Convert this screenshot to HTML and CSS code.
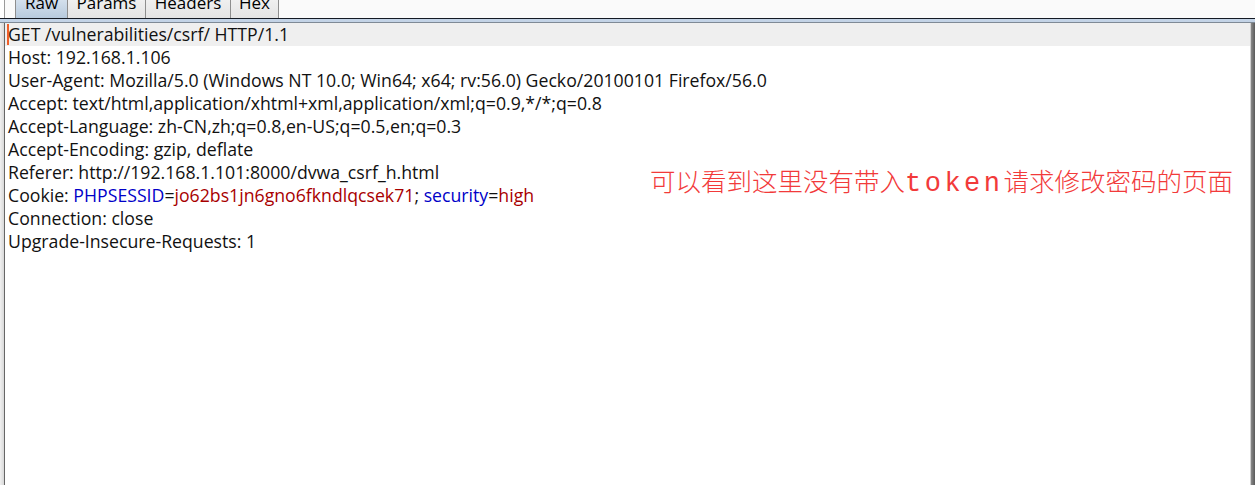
FILE: index.html
```html
<!DOCTYPE html>
<html lang="zh-CN">
<head>
  <meta charset="UTF-8">
  <title>Raw request</title>
  <link rel="stylesheet" href="styles.css">
</head>
<body>
  <div class="tabbar">
    <div class="tab-stub"></div>
    <div class="tab active">Raw</div>
    <div class="tab">Params</div>
    <div class="tab">Headers</div>
    <div class="tab">Hex</div>
  </div>
  <div class="divider"></div>

  <div class="editor">
    <div class="gutter"></div>
    <div class="content">
      <div class="line current"><span class="caret"></span>GET /vulnerabilities/csrf/ HTTP/1.1</div>
      <div class="line">Host: 192.168.1.106</div>
      <div class="line">User-Agent: Mozilla/5.0 (Windows NT 10.0; Win64; x64; rv:56.0) Gecko/20100101 Firefox/56.0</div>
      <div class="line">Accept: text/html,application/xhtml+xml,application/xml;q=0.9,*/*;q=0.8</div>
      <div class="line">Accept-Language: zh-CN,zh;q=0.8,en-US;q=0.5,en;q=0.3</div>
      <div class="line">Accept-Encoding: gzip, deflate</div>
      <div class="line">Referer: http://192.168.1.101:8000/dvwa_csrf_h.html</div>
      <div class="line">Cookie: <span class="key">PHPSESSID</span>=<span class="val">jo62bs1jn6gno6fkndlqcsek71</span>; <span class="key">security</span>=<span class="val">high</span></div>
      <div class="line">Connection: close</div>
      <div class="line">Upgrade-Insecure-Requests: 1</div>

      <!-- 注释文字 -->
      <div class="note">可以看到这里没有带入<span class="latin">token</span>请求修改密码的页面</div>
    </div>
    <div class="scrollbar"></div>
  </div>
</body>
</html>
```

FILE: styles.css
```css
body {
  margin: 0;
  height: 485px;
  overflow: hidden;
  background: #ffffff;
  font-family: "Open Sans", "Noto Sans", sans-serif;
  color: #111;
  display: flex;
  flex-direction: column;
}

/* Tabs */
.tabbar {
  height: 18px;
  background: #fafafa;
  display: flex;
  align-items: flex-end;
  overflow: hidden;
}

.tab-stub {
  width: 4px;
  height: 18px;
  border-right: 1px solid #9a9a9a;
  background: #ffffff;
  margin-right: 10px;
}

.tab {
  height: 26px;
  line-height: 20px;
  font-size: 17px;
  color: #000;
  border: 1px solid #8e8e8e;
  border-bottom: none;
  border-left: none;
  background: linear-gradient(#f4f4f4, #e4e4e4);
  box-sizing: border-box;
  display: flex;
  justify-content: center;
}

.tab:nth-child(2) {
  border-left: 1px solid #8e8e8e;
}

.tab.active {
  background: linear-gradient(#dfe8f2, #b7cadd);
  width: 53px;
}

.tab:nth-child(3) { width: 78px; }
.tab:nth-child(4) { width: 85px; }
.tab:nth-child(5) { width: 48px; }

.divider {
  height: 3px;
  border-top: 1px solid #141a24;
  border-bottom: 1px solid #7f8a96;
  background: #c3d3e6;
}

/* Editor */
.editor {
  flex: 1;
  display: flex;
}

.gutter {
  width: 4px;
  background: linear-gradient(to right, #f0f0f0, #d8d8d8);
  border-right: 1px solid #666;
}

.content {
  flex: 1;
  position: relative;
}

.line {
  height: 23px;
  line-height: 23px;
  font-size: 17.7px;
  padding-left: 3px;
  white-space: nowrap;
  position: relative;
}

.line.current {
  background: #efefef;
}

.caret {
  position: absolute;
  left: 2px;
  top: 1px;
  width: 2px;
  height: 21px;
  background: #f0602a;
}

.key {
  color: #0000c8;
}

.val {
  color: #a80000;
}

.note {
  position: absolute;
  left: 645px;
  top: 138px;
  font-family: "Noto Sans CJK SC", sans-serif;
  font-size: 25.5px;
  font-weight: 300;
  color: #f23a3a;
  white-space: nowrap;
}

.note .latin {
  font-family: "Liberation Mono", monospace;
  font-size: 27px;
  letter-spacing: 3.5px;
}

.scrollbar {
  width: 4px;
  border-left: 1px solid #d0d0d0;
  background: linear-gradient(to right, #8a8a8a, #5a5a5a);
}
```
